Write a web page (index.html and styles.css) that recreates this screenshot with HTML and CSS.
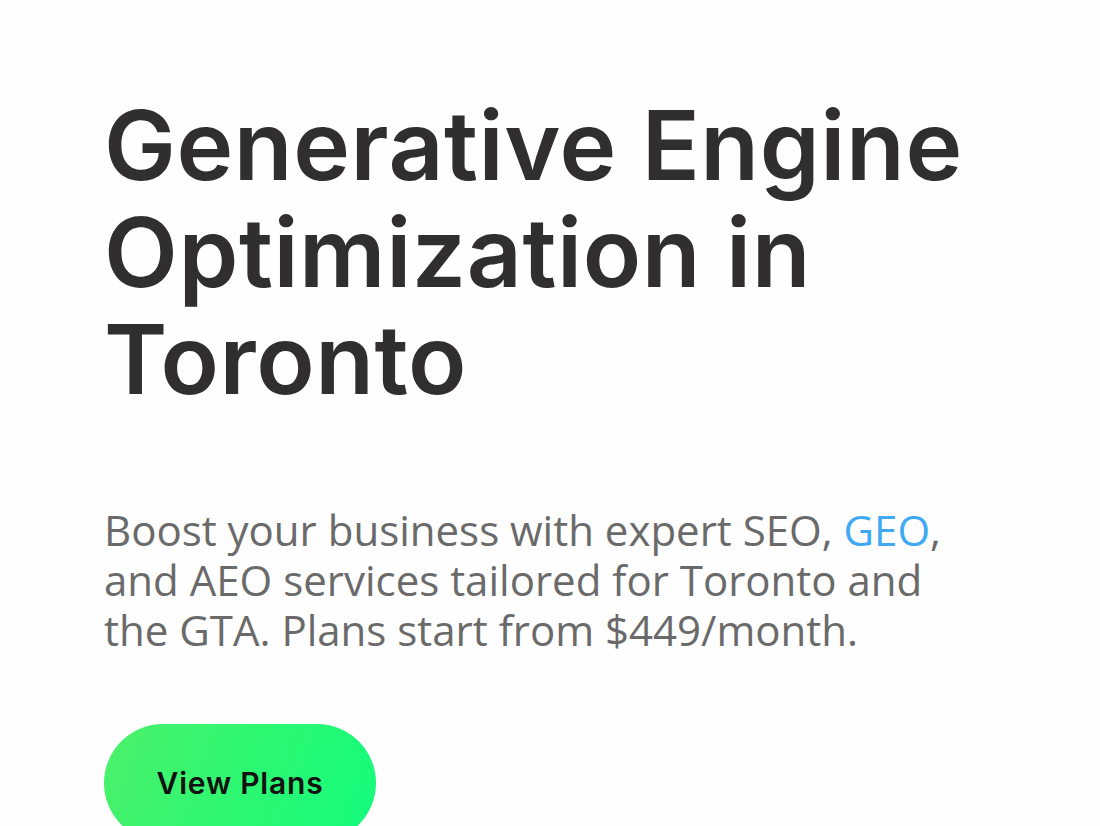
FILE: index.html
```html
<!DOCTYPE html>
<html lang="en">
<head>
<meta charset="utf-8">
<title>Generative Engine Optimization in Toronto</title>
<link rel="stylesheet" href="styles.css">
</head>
<body>
<main class="hero">
  <h1 class="hero-title">Generative Engine Optimization in Toronto</h1>
  <p class="hero-text">Boost your business with expert SEO, <a class="hero-link" href="#">GEO</a>, and AEO services tailored for Toronto and the GTA. Plans start from $449/month.</p>
  <a class="hero-button" href="#">View Plans</a>
</main>
</body>
</html>
```
FILE: styles.css
```css
html, body {
  margin: 0;
  padding: 0;
  background: #fefefe;
  overflow: hidden;
}

.hero {
  display: flex;
  flex-direction: column;
  align-items: flex-start;
  padding: 92px 0 0 104px;
}

.hero-title {
  margin: 0;
  width: 900px;
  font-family: "Inter", "Open Sans", sans-serif;
  font-weight: 600;
  font-size: 96px;
  line-height: 107px;
  letter-spacing: 0.6px;
  color: #312e30;
}

.hero-text {
  margin: 92px 0 0 0;
  width: 860px;
  font-family: "Open Sans", sans-serif;
  font-size: 42px;
  line-height: 50px;
  color: #6a6a6a;
}

.hero-link {
  color: #3fa9f5;
  text-decoration: none;
}

.hero-button {
  margin-top: 69px;
  display: flex;
  align-items: center;
  justify-content: center;
  width: 272px;
  height: 118px;
  border-radius: 59px;
  background: linear-gradient(110deg, #4cf06a 0%, #2df771 50%, #14fb7c 100%);
  font-family: "Inter", "Open Sans", sans-serif;
  font-weight: 600;
  font-size: 30px;
  letter-spacing: 0.8px;
  color: #121212;
  text-decoration: none;
}
```
